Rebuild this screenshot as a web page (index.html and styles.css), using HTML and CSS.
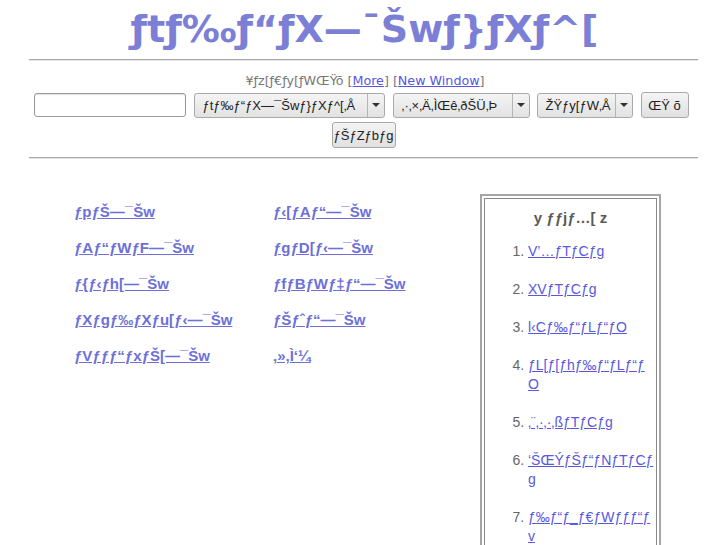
FILE: index.html
```html
<!DOCTYPE html>
<html lang="ja">
<head>
<meta charset="utf-8">
<title>ƒtƒ‰ƒ“ƒX—¯Šwƒ}ƒXƒ^[</title>
<link rel="stylesheet" href="styles.css">
</head>
<body>
<header class="masthead">
  <h1 class="title">ƒtƒ‰ƒ“ƒX—¯Šwƒ}ƒXƒ^[</h1>
</header>
<hr class="rule">
<form class="search">
  <p class="search-label">¥ƒz[ƒ€ƒy[ƒWŒŸõ [<a href="#">More</a>] [<a href="#">New Window</a>]</p>
  <div class="search-row search-main">
    <input class="field" type="text">
    <span class="dropdown dd-site"><span class="dd-label">ƒtƒ‰ƒ“ƒX—¯Šwƒ}ƒXƒ^[‚Å</span><span class="dd-arrow"></span></span>
    <span class="dropdown dd-mode"><span class="dd-label">‚·‚×‚Ä‚ÌŒê‚ðŠÜ‚Þ</span><span class="dd-arrow"></span></span>
    <span class="dropdown dd-page"><span class="dd-label">ŽŸƒy[ƒW‚Å</span><span class="dd-arrow"></span></span>
    <button class="btn btn-go" type="button">ŒŸ õ</button>
  </div>
  <div class="search-row">
    <button class="btn btn-reset" type="button">ƒŠƒZƒbƒg</button>
  </div>
</form>
<hr class="rule">
<main class="content">
  <nav class="regions">
    <a href="#">ƒpƒŠ—¯Šw</a>
    <a href="#">ƒ‹[ƒAƒ“—¯Šw</a>
    <a href="#">ƒAƒ“ƒWƒF—¯Šw</a>
    <a href="#">ƒgƒD[ƒ‹—¯Šw</a>
    <a href="#">ƒ{ƒ‹ƒh[—¯Šw</a>
    <a href="#">ƒfƒBƒWƒ‡ƒ“—¯Šw</a>
    <a href="#">ƒXƒgƒ‰ƒXƒu[ƒ‹—¯Šw</a>
    <a href="#">ƒŠƒˆƒ“—¯Šw</a>
    <a href="#">ƒVƒƒƒ“ƒxƒŠ[—¯Šw</a>
    <a href="#">‚»‚Ì‘¼</a>
  </nav>
  <aside class="menu-box">
    <div class="menu-inner">
      <h2 class="menu-title">y ƒƒjƒ…[ z</h2>
      <ol class="menu-list">
        <li><a href="#">V’…ƒTƒCƒg</a></li>
        <li><a href="#">XVƒTƒCƒg</a></li>
        <li><a href="#">l‹Cƒ‰ƒ“ƒLƒ“ƒO</a></li>
        <li><a href="#">ƒL[ƒ[ƒhƒ‰ƒ“ƒLƒ“ƒO</a></li>
        <li><a href="#">‚¨‚·‚·‚ßƒTƒCƒg</a></li>
        <li><a href="#">‘ŠŒÝƒŠƒ“ƒNƒTƒCƒg</a></li>
        <li><a href="#">ƒ‰ƒ“ƒ_ƒ€ƒWƒƒƒ“ƒv</a></li>
      </ol>
    </div>
  </aside>
</main>
</body>
</html>
```
FILE: styles.css
```css
html, body {
  margin: 0;
  padding: 0;
  background: #fff;
  font-family: "Liberation Sans", Arial, "Noto Sans CJK JP", sans-serif;
  color: #333;
}

.masthead {
  height: 59px;
  display: flex;
  align-items: center;
  justify-content: center;
}

.title {
  margin: 0;
  font-family: "DejaVu Sans", "Noto Sans CJK JP", sans-serif;
  font-size: 38px;
  font-weight: bold;
  color: #7b7fd6;
  line-height: 1;
  padding-bottom: 2px;
  padding-left: 2px;
}

.rule {
  width: 92%;
  margin: 0 auto;
  height: 0;
  border: none;
  border-top: 1px solid #a8a8a8;
  border-bottom: 1px solid #e4e4e4;
}

.search {
  padding: 12px 0 9px;
  display: flex;
  flex-direction: column;
  align-items: center;
  gap: 4px;
}

.search-label {
  margin: 0;
  font-family: "DejaVu Sans", "Noto Sans CJK JP", sans-serif;
  font-size: 12.7px;
  line-height: 15px;
  color: #777;
  padding-left: 3px;
}

.search-label a {
  color: #5555e8;
}

.search-row {
  display: flex;
  align-items: center;
  gap: 8px;
}

.search-main {
  padding-right: 5px;
}

.field {
  width: 152px;
  height: 24px;
  box-sizing: border-box;
  border: 1px solid #999;
  border-radius: 3px;
  box-shadow: inset 0 1px 1px rgba(0,0,0,0.12);
  background: #fff;
  margin: 0;
}

.dropdown {
  position: relative;
  height: 25px;
  box-sizing: border-box;
  border: 1px solid #a9a9a9;
  border-radius: 3px;
  background: linear-gradient(#f4f4f4, #e2e2e2);
  display: flex;
  align-items: center;
  font-size: 13px;
  color: #222;
}

.dd-label {
  flex: 1;
  padding-left: 8px;
  white-space: nowrap;
  overflow: hidden;
}

.dd-arrow {
  width: 16px;
  height: 100%;
  border-left: 1px solid #b5b5b5;
  display: flex;
  align-items: center;
  justify-content: center;
}

.dd-arrow::before {
  content: "";
  border-left: 4px solid transparent;
  border-right: 4px solid transparent;
  border-top: 4px solid #333;
}

.dd-site { width: 191px; }
.dd-mode { width: 137px; }
.dd-page { width: 96px; margin-left: -1px; }

.btn {
  height: 26px;
  box-sizing: border-box;
  border: 1px solid #a9a9a9;
  border-radius: 3px;
  background: linear-gradient(#f4f4f4, #e0e0e0);
  font-family: "Liberation Sans", Arial, sans-serif;
  font-size: 13px;
  color: #222;
  padding: 0;
  margin: 0;
}

.btn-go { width: 48px; }
.btn-reset { width: 64px; }

.content {
  display: flex;
  align-items: flex-start;
  padding: 35px 0 0 74px;
}

.regions {
  width: 406px;
  display: grid;
  grid-template-columns: 199px 199px;
  row-gap: 18px;
  padding-top: 9px;
}

.regions a {
  font-size: 15px;
  font-weight: bold;
  line-height: 18px;
  color: #6d70d8;
  text-decoration: underline;
  justify-self: start;
}

.menu-box {
  width: 181px;
  box-sizing: border-box;
  border: 2px solid #a5a5a5;
  padding: 2px;
  height: 400px;
}

.menu-inner {
  border: 1px solid #8a8a8a;
  height: 100%;
  box-sizing: border-box;
}

.menu-title {
  margin: 0;
  padding-top: 10px;
  text-align: center;
  font-size: 15px;
  font-weight: bold;
  color: #5a5a5a;
  line-height: 18px;
}

.menu-list {
  margin: 15px 0 0;
  padding: 0 2px 0 43px;
  font-size: 14px;
  line-height: 19px;
  color: #666;
  word-break: break-all;
}

.menu-list li {
  margin-bottom: 19px;
}

.menu-list a {
  color: #5858e0;
}
```
